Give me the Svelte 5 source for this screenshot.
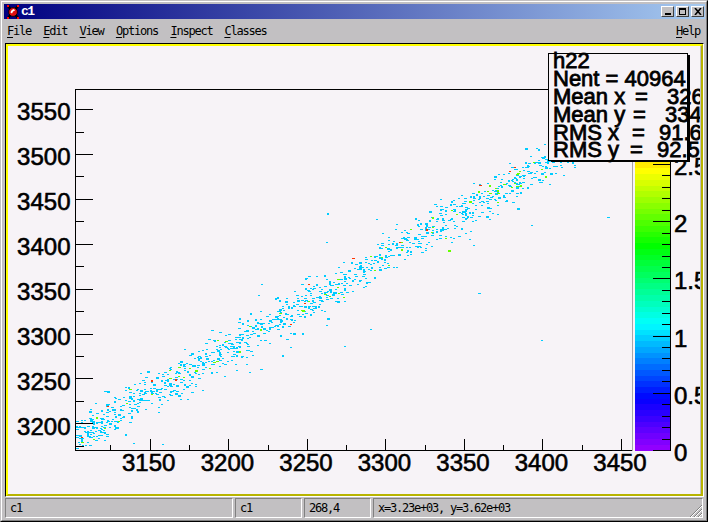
<script lang="ts">
  const menus = ['File', 'Edit', 'View', 'Options', 'Inspect', 'Classes'];
  const bg = '#f7f3f7';

  // plot frame in window coordinates
  const left = 75, right = 632, top = 89, bottom = 450;

  const xLabels = [3150, 3200, 3250, 3300, 3350, 3400, 3450];
  const xMajor = [149.7, 228.4, 307, 385.4, 464, 542.4, 621];
  const xMinor = [110.4, 189, 267.7, 346.2, 424.7, 503.2, 581.7];
  const yLabels = [3550, 3500, 3450, 3400, 3350, 3300, 3250, 3200];
  const yMajor = yLabels.map((_, i) => 109 + i * 44.9);
  const yMinor = yLabels.map((_, i) => 131.5 + i * 44.9);

  const zLabels = [
    { text: '2.5', y: 175 },
    { text: '2', y: 232 },
    { text: '1.5', y: 289 },
    { text: '1', y: 347 },
    { text: '0.5', y: 404 },
    { text: '0', y: 461 },
  ];
  const zTicks = Array.from({ length: 26 }, (_, i) => ({
    y: 450 - i * 11.44,
    len: i % 5 === 0 ? 17 : 8,
  }));

  const stops = [
    [0, [153, 0, 255]],
    [0.18, [0, 0, 255]],
    [0.44, [0, 255, 255]],
    [0.71, [0, 255, 0]],
    [0.97, [255, 255, 0]],
    [1, [255, 225, 0]],
  ] as [number, number[]][];

  function rainbow(t: number) {
    for (let i = 1; i < stops.length; i++) {
      if (t <= stops[i][0]) {
        const [t0, a] = stops[i - 1];
        const [t1, b] = stops[i];
        const f = (t - t0) / (t1 - t0);
        const c = a.map((v, k) => Math.round(v + (b[k] - v) * f));
        return `rgb(${c[0]},${c[1]},${c[2]})`;
      }
    }
    return '#ffe100';
  }

  const bands = Array.from({ length: 50 }, (_, i) => ({
    y: 450 - (i + 1) * 5.76,
    h: 5.76,
    fill: rainbow((i + 0.5) / 50),
  }));

  const stats = [
    { label: 'h22', y: 68 },
    { label: 'Nent = 40964', y: 86 },
    { label: 'Mean x', eq: 635, value: '326', vx: 667, y: 104 },
    { label: 'Mean y', eq: 633, value: '334', vx: 665, y: 122 },
    { label: 'RMS x', eq: 632, value: '91.6', vx: 659, y: 139.5 },
    { label: 'RMS y', eq: 630, value: '92.5', vx: 657, y: 157 },
  ];

  // fake the scatter with a seeded generator so it stays the same every run
  let seed = 40964;
  function rnd() {
    seed = (seed + 0x6d2b79f5) | 0;
    let t = Math.imul(seed ^ (seed >>> 15), 1 | seed);
    t = (t + Math.imul(t ^ (t >>> 7), 61 | t)) ^ t;
    return ((t ^ (t >>> 14)) >>> 0) / 4294967296;
  }
  function gauss() {
    return Math.sqrt(-2 * Math.log(rnd() + 1e-9)) * Math.cos(2 * Math.PI * rnd());
  }

  const cells = { cyan: '', green: '', red: '' };
  function addCell(x: number, y: number, kind: 'cyan' | 'green' | 'red') {
    // bins are about 1.57 x 0.9 px on screen
    const px = Math.round(left + 1 + Math.floor((x - left) / 1.57) * 1.57);
    const py = Math.round(bottom - 1 - Math.floor((bottom - y) / 0.9) * 0.9);
    if (px < left + 1 || px > right - 3 || py < top + 1 || py > bottom - 2) return;
    const w = rnd() < 0.3 ? 3 : 2;
    const h = rnd() < 0.2 ? 2 : 1;
    cells[kind] += `M${px} ${py}h${w}v${h}h${-w}z`;
  }

  for (let i = 0; i < 1250; i++) {
    const x = left + rnd() * 500;
    const wide = rnd() < 0.04;
    const y = 430 - 0.584 * (x - 87) + gauss() * (wide ? 22 : 10);
    const r = rnd();
    addCell(x, y, r < 0.05 ? 'green' : r < 0.057 ? 'red' : 'cyan');
  }
  // denser blob in the lower left corner
  for (let i = 0; i < 30; i++) {
    addCell(76 + rnd() * 30, 428 + gauss() * 8, 'cyan');
  }
  // stray hits far from the band
  const strays = [[606, 217], [478, 294], [132, 443], [540, 341], [345, 346], [281, 356], [193, 366], [162, 444], [370, 330], [327, 214], [516, 183]];
  for (const [x, y] of strays) addCell(x, y, 'cyan');
</script>

<div class="window">
  <div class="inner">
    <div class="titlebar">
      <svg class="app-icon" width="12" height="14" viewBox="0 0 12 14">
        <rect width="12" height="14" fill="#000080" />
        <path d="M1 1L11 13M11 1L1 13" stroke="#000" stroke-width="2.4" />
        <circle cx="6" cy="7" r="4.4" fill="#e01010" stroke="#000" stroke-width="0.8" />
        <path d="M3.5 7.5Q4 4.5 7 4L8 5.5Q5.5 6 5 8.5Z" fill="#fff" />
        <path d="M0 1h2M10 1h2M0 13h2M10 13h2" stroke="#f00" stroke-width="2" />
      </svg>
      <span class="title">c1</span>
      <div class="win-buttons">
        <button class="win-btn" aria-label="Minimize"><span class="min-glyph"></span></button>
        <button class="win-btn" aria-label="Maximize"><span class="max-glyph"></span></button>
        <button class="win-btn close" aria-label="Close">
          <svg width="8" height="7" viewBox="0 0 8 7"><path d="M1 0L7 7M7 0L1 7" stroke="#000" stroke-width="1.6" /></svg>
        </button>
      </div>
    </div>

    <div class="menubar">
      {#each menus as m}
        <span class="menu"><u>{m[0]}</u>{m.slice(1)}</span>
      {/each}
      <span class="menu help"><u>H</u>elp</span>
    </div>

    <div class="canvas-sunken">
      <div class="canvas">
        <svg class="plot" width="692" height="448" viewBox="8 46 692 448">
          <rect x="8" y="46" width="692" height="448" fill={bg} />

          <g shape-rendering="crispEdges">
            <path d={cells.cyan} fill="#00ccff" />
            <path d={cells.green} fill="#66ff00" />
            <path d={cells.red} fill="#ff3300" />

            <!-- frame -->
            <path d="M{left}.5 {bottom}V{top}.5H{right}" fill="none" stroke="#000" />
            <path d="M{left} {bottom}.5H{right}" stroke="#000" />
            <path d="M{right}.5 {top}V{bottom + 1}" stroke="#a8a6a8" />

            <!-- axis ticks -->
            {#each xMajor as x}
              <line x1={Math.round(x) + 0.5} x2={Math.round(x) + 0.5} y1="439" y2="450" stroke="#000" />
            {/each}
            {#each xMinor as x}
              <line x1={Math.round(x) + 0.5} x2={Math.round(x) + 0.5} y1="445" y2="450" stroke="#000" />
            {/each}
            {#each yMajor as y}
              <line x1="75" x2="93" y1={Math.round(y) + 0.5} y2={Math.round(y) + 0.5} stroke="#000" />
            {/each}
            {#each yMinor as y}
              {#if y < 450}
                <line x1="75" x2="84" y1={Math.round(y) + 0.5} y2={Math.round(y) + 0.5} stroke="#000" />
              {/if}
            {/each}

            <!-- colour scale -->
            {#each bands as b}
              <rect x="635" y={b.y} width="35" height={b.h + 0.5} fill={b.fill} />
            {/each}
            <path d="M670.5 160V450.5H655" fill="none" stroke="#000" />
            {#each zTicks as t}
              <line x1={670 - t.len} x2="670" y1={Math.round(t.y) + 0.5} y2={Math.round(t.y) + 0.5} stroke="#000" />
            {/each}
          </g>

          <g class="num">
            {#each xLabels as label, i}
              <text x={xMajor[i] - 1} y="471" text-anchor="middle">{label}</text>
            {/each}
            {#each yLabels as label, i}
              <text x="70.5" y={120 + i * 45} text-anchor="end">{label}</text>
            {/each}
            {#each zLabels as z}
              <text x="674" y={z.y}>{z.text}</text>
            {/each}
          </g>

          <!-- stats box -->
          <g shape-rendering="crispEdges">
            <rect x="551" y="55" width="139" height="107" fill="#000" />
            <rect x="548.5" y="53.5" width="139" height="107" fill={bg} stroke="#000" />
          </g>
          <g class="stat">
            {#each stats as s}
              <text x="553" y={s.y}>{s.label}</text>
              {#if s.value}
                <text x={s.eq} y={s.y}>=</text>
                <text x={s.vx} y={s.y}>{s.value}</text>
              {/if}
            {/each}
          </g>
        </svg>
      </div>
    </div>

    <div class="statusbar">
      <div class="panel p1">c1</div>
      <div class="panel p2">c1</div>
      <div class="panel p3">268,4</div>
      <div class="panel p4">
        x=3.23e+03, y=3.62e+03
        <svg class="grip" width="12" height="12" viewBox="0 0 12 12">
          <path d="M0 12L12 0M4 12L12 4M8 12L12 8" stroke="#808080" stroke-width="1" />
          <path d="M1 12L12 1M5 12L12 5M9 12L12 9" stroke="#fff" stroke-width="1" />
        </svg>
      </div>
    </div>
  </div>
</div>

<style>
  :global(body) {
    margin: 0;
    background: #c2c0c2;
  }

  .window {
    width: 708px;
    height: 522px;
    box-sizing: border-box;
    background: #c2c0c2;
    border-top: 1px solid #c2c0c2;
    border-left: 1px solid #c2c0c2;
    border-right: 1px solid #000;
    border-bottom: 1px solid #000;
    font-family: "DejaVu Sans Mono", monospace;
    overflow: hidden;
  }

  .inner {
    height: 100%;
    box-sizing: border-box;
    display: flex;
    flex-direction: column;
    padding: 2px 1px 2px 2px;
    border-top: 1px solid #fff;
    border-left: 1px solid #fff;
    border-right: 1px solid #808080;
    border-bottom: 1px solid #808080;
  }

  .titlebar {
    height: 15px;
    flex: none;
    display: flex;
    align-items: center;
    padding-left: 3px;
    background: linear-gradient(to right, #000080, #a6caf0);
    color: #fff;
  }

  .app-icon {
    flex: none;
  }

  .title {
    margin-left: 2px;
    font: bold 13px "Liberation Mono", monospace;
    letter-spacing: -1.5px;
  }

  .win-buttons {
    margin-left: auto;
    display: flex;
    gap: 2px;
    padding-right: 1px;
  }

  .win-btn {
    width: 13px;
    height: 11px;
    padding: 0;
    box-sizing: border-box;
    background: #c2c0c2;
    border: 1px solid;
    border-color: #fff #404040 #404040 #fff;
    position: relative;
    display: flex;
    align-items: center;
    justify-content: center;
  }

  .min-glyph {
    position: absolute;
    left: 3px;
    bottom: 1px;
    width: 6px;
    height: 2px;
    background: #000;
  }

  .max-glyph {
    width: 7px;
    height: 7px;
    box-sizing: border-box;
    border: 1px solid #000;
    border-top-width: 2px;
  }

  .menubar {
    height: 24px;
    flex: none;
    display: flex;
    align-items: center;
    padding-left: 3px;
    font-size: 12px;
    color: #000;
  }

  .menu {
    width: 36.3px;
    white-space: nowrap;
    letter-spacing: -1.22px;
  }

  .menu:nth-child(4) {
    width: 54.5px;
  }

  .menu:nth-child(5) {
    width: 54px;
  }

  .menu u {
    text-underline-offset: 2px;
  }

  .help {
    margin-left: auto;
    width: 29px;
  }

  .canvas-sunken {
    flex: 1;
    min-height: 0;
    margin: 0 1px 0 1px;
    border: 1px solid;
    border-color: #000 #fff #fff #000;
    display: flex;
  }

  .canvas {
    flex: 1;
    min-width: 0;
    border: 2px solid;
    border-color: #ffff00 #b8b400 #b8b400 #ffff00;
    overflow: hidden;
  }

  .plot {
    display: block;
  }

  .num text {
    font: 24px "Liberation Sans", sans-serif;
    fill: #000;
    stroke: #000;
    stroke-width: 0.6px;
  }

  .stat text {
    font: 22px "Liberation Sans", sans-serif;
    fill: #000;
    stroke: #000;
    stroke-width: 0.8px;
    white-space: pre;
  }

  .statusbar {
    height: 20px;
    flex: none;
    margin: 1px 2px 0 1px;
    display: flex;
    gap: 2px;
    font-size: 12px;
    letter-spacing: -1.22px;
    color: #000;
  }

  .panel {
    box-sizing: border-box;
    border: 1px solid;
    border-color: #808080 #fff #fff #808080;
    display: flex;
    align-items: center;
    padding-left: 4px;
    position: relative;
    white-space: nowrap;
  }

  .p1 {
    width: 228px;
  }

  .p2,
  .p3 {
    width: 67px;
  }

  .p4 {
    flex: 1;
  }

  .grip {
    position: absolute;
    right: 0;
    bottom: 0;
  }
</style>
